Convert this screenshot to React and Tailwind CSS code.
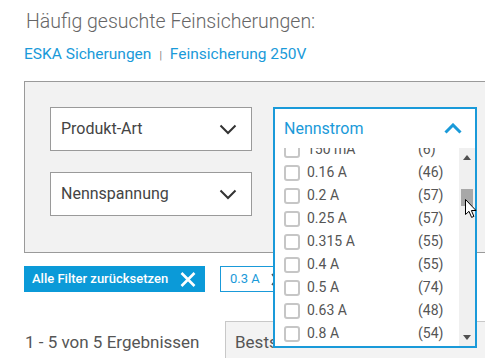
import React from 'react';

const items = [
    { label: '150 mA', count: 6 },
    { label: '0.16 A', count: 46 },
    { label: '0.2 A', count: 57 },
    { label: '0.25 A', count: 57 },
    { label: '0.315 A', count: 55 },
    { label: '0.4 A', count: 55 },
    { label: '0.5 A', count: 74 },
    { label: '0.63 A', count: 48 },
    { label: '0.8 A', count: 54 },
    { label: '1 A', count: 60 },
];

function ChevronDown() {
    return (
        <svg width="18" height="11" viewBox="0 0 18 11" fill="none">
            <path d="M1.5 1.5 L9 9 L16.5 1.5" stroke="#333" strokeWidth="2" />
        </svg>
    );
}

function Select({ label }) {
    return (
        <div className="w-[202px] h-[44px] bg-white border border-[#9a9a9a] flex items-center justify-between pl-[10px] pr-[14px]">
            <span className="text-[16px] text-[#444]">{label}</span>
            <ChevronDown />
        </div>
    );
}

function Dropdown() {
    return (
        <div className="absolute left-0 top-0 z-10 w-[204px] h-[241px] bg-white border-2 border-[#1a9ad9] flex flex-col">
            <div className="h-[39px] shrink-0 flex items-center justify-between pl-[9px] pr-[13px]">
                <span className="text-[16px] text-[#1a9ad9]">Nennstrom</span>
                <svg width="18" height="11" viewBox="0 0 18 11" fill="none">
                    <path d="M1.5 9.5 L9 2 L16.5 9.5" stroke="#1a9ad9" strokeWidth="3" />
                </svg>
            </div>
            <div className="flex-1 flex min-h-0">
                <div className="flex-1 overflow-hidden">
                    <div className="mt-[-10px]">
                        {items.map((it) => (
                            <div key={it.label} className="h-[23px] flex items-center pl-[9px]">
                                <span className="w-[16px] h-[16px] border-2 border-[#c6c6c6] rounded-[3px] shrink-0" />
                                <span className="flex-1 ml-[7px] text-[14px] text-[#555]">{it.label}</span>
                                <span className="w-[41px] text-[14px] text-[#555]">({it.count})</span>
                            </div>
                        ))}
                    </div>
                </div>
                <div className="w-[16px] bg-[#f0f0f0] flex flex-col items-center">
                    <svg className="mt-[7px]" width="8" height="5" viewBox="0 0 8 5">
                        <path d="M0 5 L4 0 L8 5 Z" fill="#505050" />
                    </svg>
                    <div className="mt-[29px] w-[12px] h-[17px] bg-[#a8a8a8]" />
                    <div className="flex-1" />
                    <svg className="mb-[6px]" width="8" height="5" viewBox="0 0 8 5">
                        <path d="M0 0 L8 0 L4 5 Z" fill="#505050" />
                    </svg>
                </div>
            </div>
        </div>
    );
}

export default function App() {
    return (
        <div className="w-[485px] h-[358px] overflow-hidden bg-white relative font-['Roboto',sans-serif]">
            <div className="pl-[24px]">
                <div className="pt-[10px] pl-[2px] h-[34px] text-[19.5px] font-light leading-[24px] text-[#666]">
                    Häufig gesuchte Feinsicherungen:
                </div>
                <div className="mt-[11px] h-[20px] flex items-center text-[15.5px] text-[#1a9ad9]">
                    <span>ESKA Sicherungen</span>
                    <span className="mx-[8px] text-[10px] text-[#777]">|</span>
                    <span>Feinsicherung 250V</span>
                </div>

                <div className="mt-[16px] w-[520px] h-[172px] bg-[#f2f2f2] border border-[#9a9a9a] pt-[25px] pl-[25px] flex">
                    <div className="flex flex-col gap-[21px]">
                        <Select label="Produkt-Art" />
                        <Select label="Nennspannung" />
                    </div>
                    <div className="relative ml-[21px] w-[204px]">
                        <Dropdown />
                    </div>
                </div>

                <div className="mt-[13px] flex items-center gap-[15px]">
                    <div className="w-[181px] h-[26px] bg-[#0b9ad8] flex items-center pl-[8px]">
                        <span className="text-[13px] font-medium text-white">Alle Filter zurücksetzen</span>
                        <svg className="ml-[12px]" width="16" height="15" viewBox="0 0 16 15" fill="none">
                            <path d="M1.5 1 L14.5 14 M14.5 1 L1.5 14" stroke="white" strokeWidth="2.6" />
                        </svg>
                    </div>
                    <div className="w-[80px] h-[26px] bg-white border border-[#1a9ad9] flex items-center pl-[9px]">
                        <span className="text-[13px] text-[#1a9ad9]">0.3 A</span>
                        <svg className="ml-[11px]" width="10" height="13" viewBox="0 0 10 13" fill="none">
                            <path d="M1 1 L9 12 M9 1 L1 12" stroke="#555" strokeWidth="1.6" />
                        </svg>
                    </div>
                </div>

                <div className="mt-[29px] flex items-start">
                    <div className="w-[200px] shrink-0 h-[44px] pl-[1px] flex items-center text-[17px] text-[#555]">
                        1 - 5 von 5 Ergebnissen
                    </div>
                    <div className="ml-[1px] w-[280px] shrink-0 h-[44px] bg-[#f3f3f3] border border-[#c8c8c8] flex items-center pl-[9px] text-[17px] text-[#555]">
                        Bestseller
                    </div>
                </div>
            </div>

            <svg className="absolute left-[465px] top-[199px] z-20" width="13" height="20" viewBox="0 0 13 20">
                <path d="M0.5 0.5 L0.5 15.5 L4 12.3 L6.6 18.4 L8.9 17.4 L6.4 11.5 L11 11.5 Z" fill="white" stroke="black" strokeWidth="1" />
            </svg>
        </div>
    );
}
